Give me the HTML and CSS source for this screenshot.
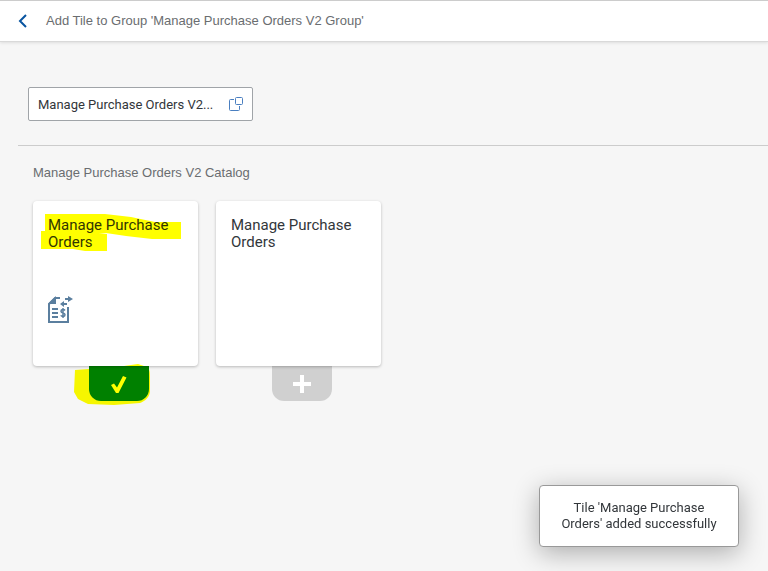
FILE: index.html
```html
<!DOCTYPE html>
<html lang="en">
<head>
    <meta charset="UTF-8">
    <meta name="viewport" content="width=device-width, initial-scale=1.0">
    <title>Add Tile to Group</title>
    <link rel="stylesheet" href="styles.css">
</head>
<body>

<header>
    <button class="back" type="button" aria-label="Back">
        <svg width="10" height="14" viewBox="0 0 10 14"><path d="M8 1 2 7l6 6" fill="none" stroke="#0854a0" stroke-width="2"/></svg>
    </button>
    <h1>Add Tile to Group 'Manage Purchase Orders V2 Group'</h1>
</header>

<main>
    <div class="filter">
        <input class="filter-input" type="text" aria-label="Catalog" value="Manage Purchase Orders V2...">
        <button class="value-help" type="button" aria-label="Select catalog">
            <svg width="16" height="16" viewBox="0 0 16 16" fill="none" stroke="#4a7fc0"><path d="M6 3.500H2.500q-1 0-1 1v9q0 1 1 1h8q1 0 1-1V10"/><rect x="7.500" y="1.500" width="7" height="7" rx="1"/></svg>
        </button>
    </div>

    <section class="catalog">
        <h2>Manage Purchase Orders V2 Catalog</h2>
        <div class="tiles">
            <div class="tile-box">
                <a class="tile" href="#">
                    <h3>Manage Purchase Orders</h3>
                    <svg class="tile-icon" width="26" height="28" viewBox="0 0 26 28">
                        <path d="M0 8 8 0v8z" fill="#5b7f9f"/>
                        <path d="M12 2H7L1 8v18h19V11" fill="none" stroke="#5b7f9f" stroke-width="2"/>
                        <path d="M4 12h6v2H4zM4 16h6v2H4zM4 20h6v2H4z" fill="#5b7f9f"/>
                        <path d="M17 14.500c-1-1.500-4-1.300-4 .7 0 2.300 4 1.300 4 3.600 0 2-3 2.200-4.300.6M15 12v10" fill="none" stroke="#5b7f9f" stroke-width="1.500"/>
                        <path d="M17 2h3V0l5 3-5 3V4h-3zM19 7h-3V5l-4 3 4 3V9h3z" fill="#5b7f9f"/>
                    </svg>
                </a>
                <button class="toggle added" type="button" aria-label="Remove tile">
                    <svg width="16" height="18" viewBox="0 0 16 18"><path d="M0 10 3 8.500l3 4L12 1l3.500 1.500L7.500 18H5z" fill="#fff"/></svg>
                </button>
                <svg class="marker" width="165" height="210" viewBox="0 0 165 210" fill="#ff0">
                    <path d="M12 13h60l26 3 24 5h26v17h-29l-26-3-20-3H66l8 1v17H52l-12-2H8V30h4z"/>
                    <path d="M42 169l14-1 5-3h30l14-2 9 3c3 2 3 6 3 10v15c-1 6-5 9-10 11l-26 2-26-1-10-5-4-7z"/>
                </svg>
            </div>
            <div class="tile-box">
                <a class="tile" href="#">
                    <h3>Manage Purchase Orders</h3>
                </a>
                <button class="toggle" type="button" aria-label="Add tile">
                    <svg width="18" height="18" viewBox="0 0 18 18"><path d="M7 0h4v7h7v4h-7v7H7v-7H0V7h7z" fill="#fff"/></svg>
                </button>
            </div>
        </div>
    </section>
</main>

<div class="toast" role="status">Tile 'Manage Purchase Orders' added successfully</div>

</body>
</html>
```

FILE: styles.css
```css
* {
    box-sizing: border-box;
}
body {
    margin: 0;
    min-height: 100vh;
    font-family: Roboto, "Noto Sans", sans-serif;
    font-size: 13px;
    color: #32363a;
    background-color: #f6f6f6;
}
button {
    padding: 0;
    border: 0;
    background: none;
    cursor: pointer;
}
svg {
    display: block;
}
h1, h2, h3 {
    margin: 0;
    font-weight: normal;
}
h1, h2 {
    font-family: "Liberation Sans", Arial, sans-serif;
    font-size: 13px;
    line-height: 20px;
    color: #6a6d70;
}
header {
    display: flex;
    align-items: center;
    gap: 18px;
    height: 42px;
    padding: 0 18px;
    background-color: #fff;
    border-top: 1px solid #ccc;
    border-bottom: 1px solid #d9d9d9;
    box-shadow: 0 1px 3px rgba(0, 0, 0, 0.1);
}
main {
    padding: 45px 0 24px 18px;
}
.filter {
    display: flex;
    align-items: center;
    width: 225px;
    height: 34px;
    margin-left: 10px;
    padding: 0 8px 0 9px;
    background-color: #fff;
    border: 1px solid #a0a4a8;
    border-radius: 2px;
}
.filter-input {
    flex: 1;
    min-width: 0;
    padding: 0;
    border: 0;
    outline: 0;
    font: inherit;
    color: inherit;
    background: none;
}
.catalog {
    margin-top: 24px;
    padding: 17px 15px 0;
    border-top: 1px solid #ccc;
}
.tiles {
    display: flex;
    flex-wrap: wrap;
    gap: 18px;
    margin-top: 18px;
}
.tile-box {
    position: relative;
    display: flex;
    flex-direction: column;
    align-items: center;
    width: 165px;
}
.tile {
    position: relative;
    z-index: 1;
    display: flex;
    flex-direction: column;
    justify-content: space-between;
    width: 100%;
    height: 165px;
    padding: 16px 15px 42px;
    color: inherit;
    text-decoration: none;
    background-color: #fff;
    border-radius: 4px;
    box-shadow: 0 1px 3px rgba(0, 0, 0, 0.25);
}
.tile h3 {
    font-size: 15px;
    line-height: 17px;
}
.toggle {
    display: flex;
    align-items: center;
    justify-content: center;
    width: 60px;
    height: 35px;
    margin-left: 7px;
    background-color: #d0d0d0;
    border-radius: 0 0 12px 12px;
}
.added {
    background-color: #008000;
}
/* highlighter strokes over the tile */
.marker {
    position: absolute;
    top: 0;
    left: 0;
    z-index: 2;
    mix-blend-mode: multiply;
    pointer-events: none;
}
.toast {
    position: fixed;
    right: 29px;
    bottom: 24px;
    width: 200px;
    padding: 14px 16px;
    line-height: 16px;
    text-align: center;
    background-color: #fff;
    border: 1px solid #999;
    border-radius: 4px;
    box-shadow: 0 6px 26px rgba(0, 0, 0, 0.3);
}
```
